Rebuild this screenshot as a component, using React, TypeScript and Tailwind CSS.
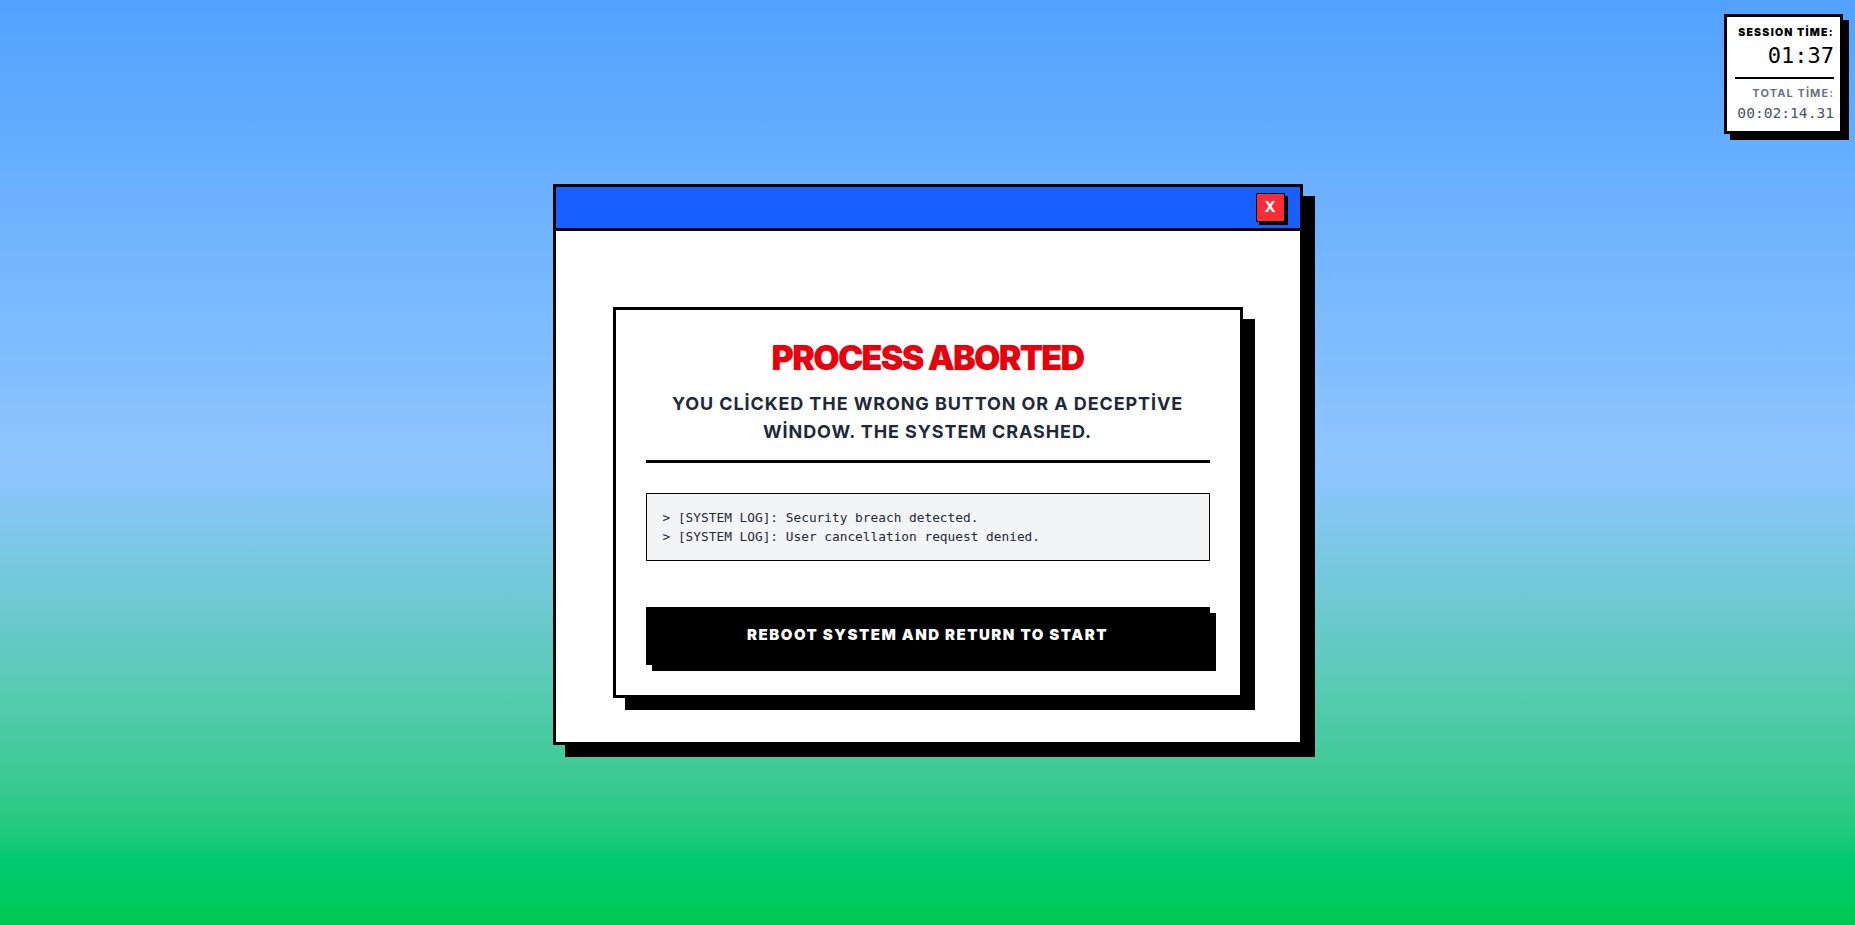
const logLines = [
  "> [SYSTEM LOG]: Security breach detected.",
  "> [SYSTEM LOG]: User cancellation request denied.",
];

function SessionTimer() {
  return (
    <div className="absolute right-[12px] top-[14px] w-[119px] border-[3px] border-black bg-white pl-2 pr-[6px] pt-2 pb-[7px] text-right whitespace-nowrap shadow-[6px_6px_0_0_#000]">
      <div className="text-[10.5px] leading-[15px] font-black tracking-[0.12em] text-black">
        SESSION TİME:
      </div>
      <div className="font-['DejaVu_Sans_Mono',monospace] text-[22px] leading-[32px] text-black">
        01:37
      </div>
      <div className="mt-[5px] h-[2px] bg-black" />
      <div className="mt-[7px] text-[11px] leading-[15px] font-bold tracking-[0.1em] text-gray-500">
        TOTAL TİME:
      </div>
      <div className="font-['DejaVu_Sans_Mono',monospace] text-[14.6px] leading-[23px] text-gray-600">
        00:02:14.31
      </div>
    </div>
  );
}

function CrashCard() {
  return (
    <div className="w-[630px] border-[3px] border-black bg-white px-[30px] pt-[28px] pb-[30px] shadow-[12px_12px_0_0_#000]">
      <div className="border-b-[3px] border-black pb-[14px] text-center">
        <h1 className="text-[34px] leading-[40px] font-black tracking-[-0.05em] text-[#e7000b]">
          PROCESS ABORTED
        </h1>
        <p className="mt-3 text-lg leading-[28px] font-bold tracking-wider text-gray-800">
          YOU CLİCKED THE WRONG BUTTON OR A DECEPTİVE WİNDOW. THE SYSTEM CRASHED.
        </p>
      </div>

      <div className="mt-[30px] border border-black bg-gray-100 px-4 py-[14px] font-['DejaVu_Sans_Mono',monospace] text-[12.8px] leading-[19px] text-gray-800">
        {logLines.map((line) => (
          <div key={line}>{line}</div>
        ))}
      </div>

      <button className="mt-[46px] flex h-[58px] w-full items-center justify-center bg-black text-[15px] font-black tracking-[0.1em] text-white shadow-[6px_6px_0_0_#000]">
        REBOOT SYSTEM AND RETURN TO START
      </button>
    </div>
  );
}

export default function App() {
  return (
    <div className="relative flex min-h-screen w-full items-center justify-center bg-linear-to-b from-blue-400 via-blue-300 to-green-500 font-['Inter',sans-serif]">
      <SessionTimer />

      <div className="mt-[3px] w-[750px] border-[3px] border-black bg-white shadow-[12px_12px_0_0_#000]">
        <div className="flex h-[44px] items-center justify-end border-b-[3px] border-black bg-[#1760ff] pr-[15px]">
          <button className="flex h-[29px] w-[29px] items-center justify-center border border-black bg-[#fb2c36] text-[15px] font-bold text-white shadow-[3px_3px_0_0_#000]">
            X
          </button>
        </div>
        <div className="flex justify-center px-[57px] pt-[76px] pb-[44px]">
          <CrashCard />
        </div>
      </div>
    </div>
  );
}
